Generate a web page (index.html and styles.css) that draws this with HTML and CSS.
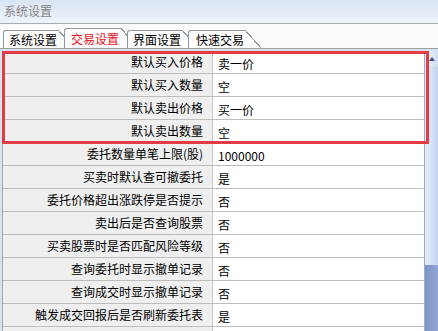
FILE: index.html
```html
<!DOCTYPE html>
<html>
<head>
<meta charset="utf-8">
<link rel="stylesheet" href="styles.css">
</head>
<body>
<div class="window">
  <div class="title">系统设置</div>
  <div class="tabs">
    <div class="tab">系统设置</div>
    <div class="tab active">交易设置</div>
    <div class="tab">界面设置</div>
    <div class="tab last">快速交易</div>
  </div>
  <div class="panel">
    <div class="grid">
      <div class="rows">
        <div class="row"><div class="label">默认买入价格</div><div class="value">卖一价</div></div>
        <div class="row"><div class="label">默认买入数量</div><div class="value">空</div></div>
        <div class="row"><div class="label">默认卖出价格</div><div class="value">买一价</div></div>
        <div class="row"><div class="label">默认卖出数量</div><div class="value">空</div></div>
        <div class="row"><div class="label">委托数量单笔上限(股)</div><div class="value">1000000</div></div>
        <div class="row"><div class="label">买卖时默认查可撤委托</div><div class="value">是</div></div>
        <div class="row"><div class="label">委托价格超出涨跌停是否提示</div><div class="value">否</div></div>
        <div class="row"><div class="label">卖出后是否查询股票</div><div class="value">否</div></div>
        <div class="row"><div class="label">买卖股票时是否匹配风险等级</div><div class="value">否</div></div>
        <div class="row"><div class="label">查询委托时显示撤单记录</div><div class="value">否</div></div>
        <div class="row"><div class="label">查询成交时显示撤单记录</div><div class="value">否</div></div>
        <div class="row"><div class="label">触发成交回报后是否刷新委托表</div><div class="value">是</div></div>
        <div class="row"><div class="label"></div><div class="value"></div></div>
      </div>
      <div class="scrollbar">
        <div class="arrow-btn"><span class="arrow"></span></div>
        <div class="track"></div>
        <div class="thumb"></div>
      </div>
    </div>
    <div class="highlight"></div>
  </div>
</div>
</body>
</html>
```

FILE: styles.css
```css
html, body {
  margin: 0;
  padding: 0;
  width: 438px;
  height: 331px;
  overflow: hidden;
  background: #f9f9f9;
  font-family: "Noto Sans CJK SC", "Liberation Sans", sans-serif;
  font-size: 12px;
  color: #000;
}

.window {
  width: 438px;
  height: 331px;
  display: flex;
  flex-direction: column;
}

.title {
  height: 23px;
  line-height: 21px;
  padding-left: 4px;
  color: #858585;
  background: linear-gradient(#d9e4f4, #eef3fa);
  border-bottom: 1px solid #a8acb3;
  flex: none;
}

.tabs {
  height: 24px;
  flex: none;
  display: flex;
  align-items: flex-end;
  padding-left: 3px;
  background: #fafbfc;
}

.tab {
  position: relative;
  height: 17px;
  line-height: 17px;
  padding: 0 1px 0 5px;
  margin-right: 6px;
  border-top: 1px solid #8e979b;
  border-left: 1px solid #8e979b;
  border-top-left-radius: 3px;
  background: #fdfdfd;
  white-space: nowrap;
}

.tab::after {
  content: "";
  position: absolute;
  left: 100%;
  top: -1px;
  width: 16px;
  height: 18px;
  background: linear-gradient(to top right, #fdfdfd 0, #fdfdfd calc(50% - 0.6px), #8e979b calc(50% - 0.6px), #8e979b calc(50% + 0.6px), transparent calc(50% + 0.6px));
}

.tab.active {
  height: 19px;
  line-height: 19px;
  padding: 0 2px 0 6px;
  color: #e8101c;
}

.tab.active::after {
  height: 20px;
}

.tab.last {
  padding-left: 7px;
}

.panel {
  position: relative;
  flex: 1;
  border-top: 1px solid #9aa0a6;
  padding: 2px 0 0 2px;
  background: #d8e2f1;
  overflow: hidden;
}

.grid {
  display: flex;
  height: 100%;
}

.rows {
  flex: 1;
  border-left: 1px solid #a9a9a9;
  background: #fff;
}

.row {
  display: flex;
  height: 22px;
  border-bottom: 1px solid #bdbdbd;
}

.label {
  width: 210px;
  box-sizing: border-box;
  flex: none;
  background: #efefef;
  border-right: 1px solid #c4c4c4;
  text-align: right;
  padding-right: 9px;
  line-height: 22px;
  white-space: nowrap;
}

.value {
  flex: 1;
  padding: 2px 0 0 5px;
  line-height: 22px;
  background: #fff;
}

.scrollbar {
  width: 13px;
  flex: none;
  border-left: 1px solid #9cabc9;
  display: flex;
  flex-direction: column;
  background: linear-gradient(to right, #e7eefa, #c4d4ef);
}

.arrow-btn {
  height: 15px;
  display: flex;
  justify-content: center;
  align-items: center;
  border-bottom: 1px solid #d5dcea;
  background: linear-gradient(to right, #eef3fb, #d3def2);
}

.arrow {
  width: 0;
  height: 0;
  border-left: 3px solid transparent;
  border-right: 3px solid transparent;
  border-bottom: 4px solid #3d5385;
}

.track {
  height: 198px;
}

.thumb {
  flex: 1;
  background: linear-gradient(to right, #7f94c8, #91a5d5);
}

.highlight {
  position: absolute;
  left: 2px;
  top: 2px;
  width: 427px;
  height: 93px;
  box-sizing: border-box;
  border: 3px solid #e43c44;
}
```
